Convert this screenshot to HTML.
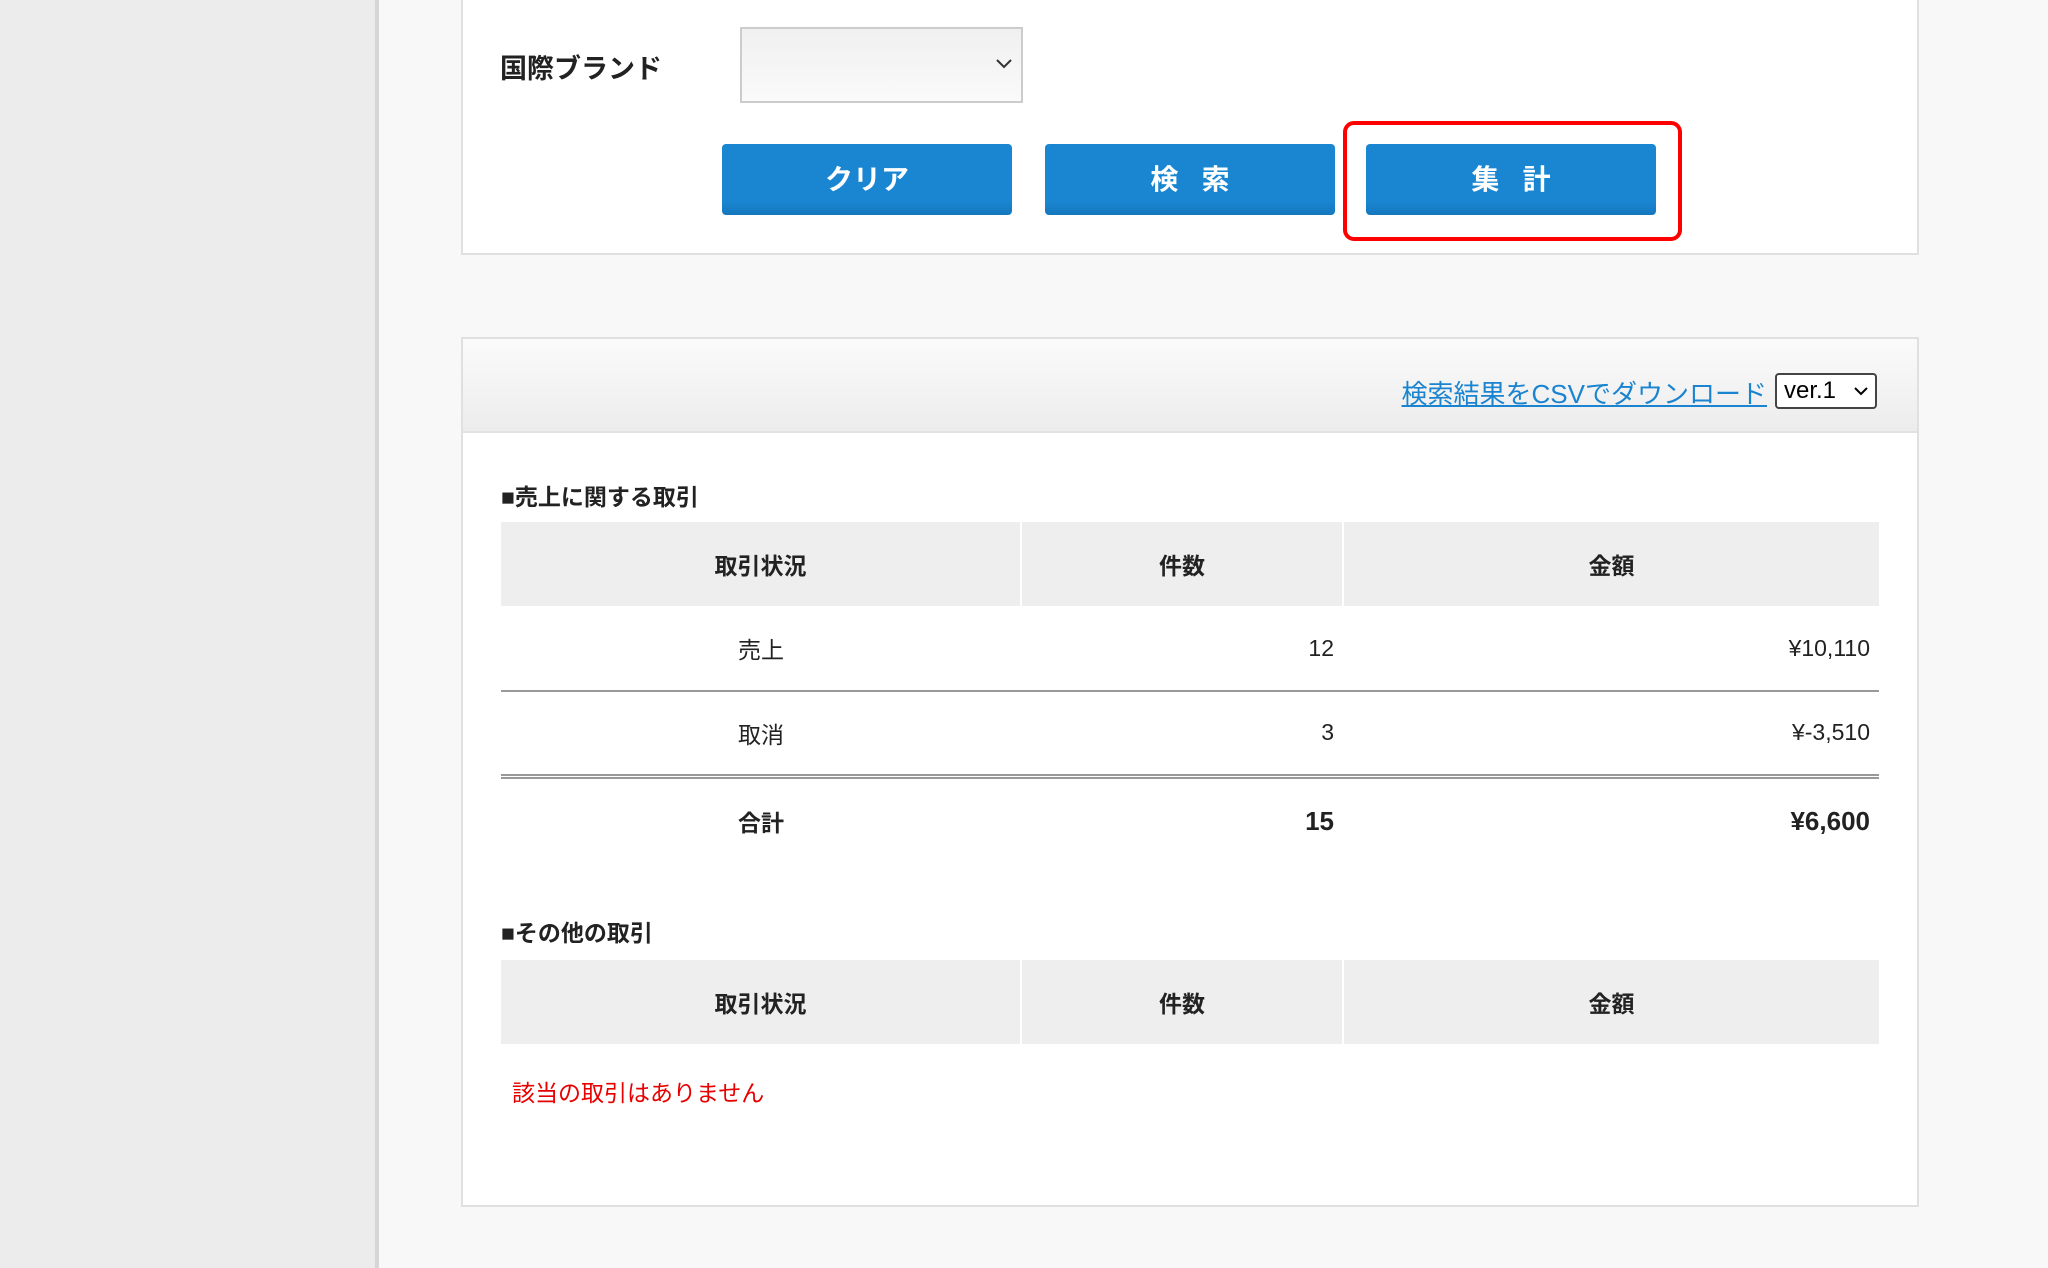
<!DOCTYPE html>
<html><head><meta charset="utf-8"><style>
*{margin:0;padding:0;box-sizing:border-box}
body{width:2048px;height:1268px;background:#f8f8f8;position:relative;overflow:hidden;font-family:"Liberation Sans","Noto Sans CJK JP",sans-serif;color:#222}
.side{position:absolute;left:0;top:0;width:379px;height:1268px;background:#ececec;border-right:4px solid #d6d6d6}
.p1{position:absolute;left:461px;top:-4px;width:1458px;height:259px;background:#fff;border:2px solid #e0e0e0}
.lbl{position:absolute;left:500px;top:48px;font-size:27px;font-weight:bold}
.sel{position:absolute;left:740px;top:27px;width:283px;height:76px;border:2px solid #ccc;background:linear-gradient(#f0f0f0,#fafafa)}
.sel svg{position:absolute;right:8px;top:29px}
.btn{position:absolute;top:144px;width:290px;height:71px;background:linear-gradient(#1a86d2 80%,#1578bd);color:#fff;font-weight:bold;font-size:28px;border-radius:4px;text-align:center;line-height:71px}
.red{position:absolute;left:1343px;top:121px;width:339px;height:120px;border:4px solid #f00;border-radius:11px}
.p2{position:absolute;left:461px;top:337px;width:1458px;height:870px;background:#fff;border:2px solid #e0e0e0}
.hd{position:absolute;left:0;top:0;width:100%;height:94px;background:linear-gradient(#fbfbfb,#ececec);border-bottom:2px solid #e2e2e2}
.lnk{position:absolute;right:150px;top:35px;font-size:26px;color:#1a84d0;text-decoration:underline}
.ver{position:absolute;left:1312px;top:34px;width:102px;height:36px;border:2px solid #444;border-radius:4px;background:#fff;font-size:24px;padding-left:7px;line-height:32px;color:#000}
.ver svg{position:absolute;right:6px;top:11px}
.st{position:absolute;left:38px;font-size:23px;font-weight:bold}
table{position:absolute;left:38px;width:1378px;border-collapse:collapse;font-size:23px}
th{background:#eee;height:84px;font-weight:bold;border-left:2px solid #fff}
th:first-child{border-left:none}
td{height:85px}
.c{text-align:center}.r{text-align:right;padding-right:9px}
tr.b1 td{border-bottom:2px solid #999}
tr.b2 td{border-bottom:5px double #999}
tr.t td{font-weight:bold;font-size:26px;height:88px}
.no{position:absolute;left:49px;top:735px;color:#e60000;font-size:23px}
</style></head><body>
<div class="side"></div>
<div class="p1">
 <div class="lbl" style="left:37px;top:49px">国際ブランド</div>
 <div class="sel" style="left:277px;top:29px"><svg width="18" height="12"><path d="M2 2l7 7 7-7" stroke="#333" stroke-width="2" fill="none"/></svg></div>
 <div class="btn" style="left:259px;top:146px">クリア</div>
 <div class="btn" style="left:582px;top:146px">検&nbsp;&nbsp;&nbsp;索</div>
 <div class="btn" style="left:903px;top:146px">集&nbsp;&nbsp;&nbsp;計</div>
 <div class="red" style="left:880px;top:123px"></div>
</div>
<div class="p2">
 <div class="hd"><span class="lnk">検索結果をCSVでダウンロード</span><div class="ver">ver.1<svg width="16" height="10"><path d="M2 2l6 6 6-6" stroke="#000" stroke-width="2" fill="none"/></svg></div></div>
 <div class="st" style="top:139px">■売上に関する取引</div>
 <table style="top:183px">
  <tr><th style="width:520px">取引状況</th><th style="width:322px">件数</th><th>金額</th></tr>
  <tr class="b1"><td class="c">売上</td><td class="r">12</td><td class="r">¥10,110</td></tr>
  <tr class="b2"><td class="c">取消</td><td class="r">3</td><td class="r">¥-3,510</td></tr>
  <tr class="t"><td class="c" style="font-size:23px">合計</td><td class="r">15</td><td class="r">¥6,600</td></tr>
 </table>
 <div class="st" style="top:575px">■その他の取引</div>
 <table style="top:621px">
  <tr><th style="width:520px">取引状況</th><th style="width:322px">件数</th><th>金額</th></tr>
 </table>
 <div class="no">該当の取引はありません</div>
</div>
</body></html>
